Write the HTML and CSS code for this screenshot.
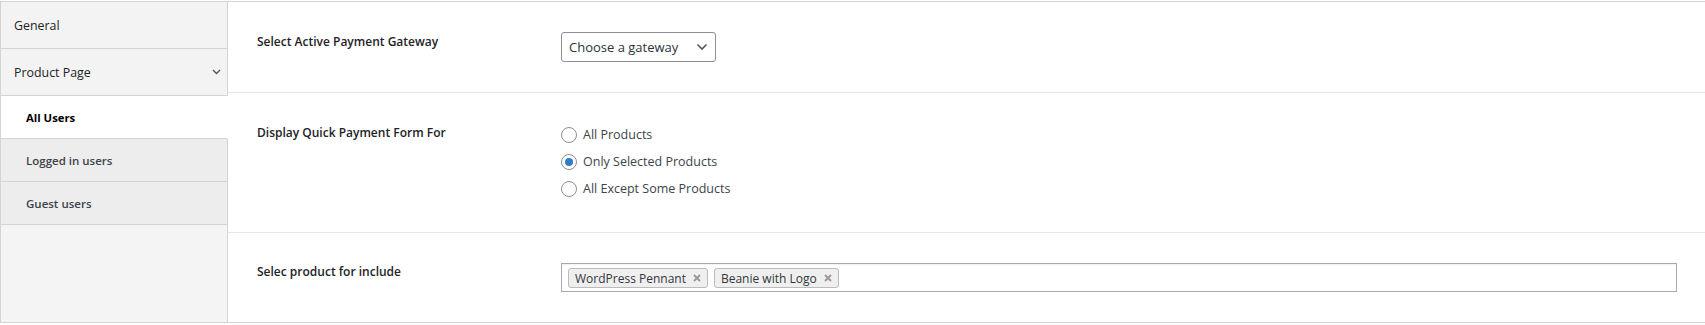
FILE: index.html
```html
<!DOCTYPE html>
<html>
<head lang="en">
    <meta charset="UTF-8">
    <title>Quick Payment Settings</title>
    <link rel="stylesheet" href="styles.css">
</head>
<body>
<div class="settings">
    <div class="tabs">
        <div class="tab">General</div>
        <div class="tab">
            Product Page
            <svg class="tab-arrow" width="9" height="6" viewBox="0 0 9 6"><path d="M1 1l3.5 3.5 3.5-3.5" fill="none" stroke="#50575e" stroke-width="1.4"/></svg>
        </div>
        <ul class="sub-tabs">
            <li class="current">All Users</li>
            <li>Logged in users</li>
            <li>Guest users</li>
        </ul>
        <div class="tabs-fill"></div>
    </div>

    <div class="panel">
        <div class="row">
            <div class="row-label">Select Active Payment Gateway</div>
            <div class="row-field">
                <div class="select">
                    Choose a gateway
                    <svg width="12" height="8" viewBox="0 0 12 8"><path d="M1.5 1.5l4.5 4.5 4.5-4.5" fill="none" stroke="#50575e" stroke-width="1.6"/></svg>
                </div>
            </div>
        </div>

        <div class="row">
            <div class="row-label">Display Quick Payment Form For</div>
            <div class="row-field">
                <ul class="radios">
                    <li><label><input type="radio" name="show_for"> All Products</label></li>
                    <li><label><input type="radio" name="show_for" checked> Only Selected Products</label></li>
                    <li><label><input type="radio" name="show_for"> All Except Some Products</label></li>
                </ul>
            </div>
        </div>

        <div class="row row-last">
            <div class="row-label">Selec product for include</div>
            <div class="row-field">
                <div class="multi">
                    <span class="choice">WordPress Pennant <svg class="remove" width="8" height="8" viewBox="0 0 8 8"><path d="M1 1l6 6M7 1l-6 6" stroke="#999" stroke-width="1.9"/></svg></span>
                    <span class="choice">Beanie with Logo <svg class="remove" width="8" height="8" viewBox="0 0 8 8"><path d="M1 1l6 6M7 1l-6 6" stroke="#999" stroke-width="1.9"/></svg></span>
                </div>
            </div>
        </div>
    </div>
</div>
</body>
</html>
```

FILE: styles.css
```css
* {
    padding: 0;
    margin: 0;
    list-style: none;
    box-sizing: border-box;
}
body {
    font-family: "Open Sans", "Noto Sans", sans-serif;
    font-size: 12px;
    color: #1d2327;
    background: #fff;
}
.settings {
    display: flex;
    margin-top: 1px;
    border-top: 1px solid #d4d4d4;
    border-bottom: 1px solid #d4d4d4;
}

/* left tabs */
.tabs {
    width: 228px;
    flex-shrink: 0;
    display: flex;
    flex-direction: column;
    border-left: 1px solid #d4d4d4;
}
.tab {
    height: 47px;
    padding: 0 6px 0 13px;
    display: flex;
    align-items: center;
    justify-content: space-between;
    font-size: 12.4px;
    background-color: #f3f3f3;
    border-right: 1px solid #d4d4d4;
    border-bottom: 1px solid #d4d4d4;
    color: #1d2327;
}
.sub-tabs li {
    height: 43px;
    padding-left: 25px;
    display: flex;
    align-items: center;
    font-size: 11.5px;
    font-weight: 600;
    color: #3c434a;
    background-color: #ededed;
    border-right: 1px solid #d4d4d4;
    border-bottom: 1px solid #d4d4d4;
}
.sub-tabs .current {
    background-color: #fff;
    border-right-color: #fff;
    color: #000;
    font-weight: 700;
    font-size: 11.3px;
}
.tabs-fill {
    flex: 1;
    background-color: #f4f4f4;
    border-right: 1px solid #d4d4d4;
}

/* right panel */
.panel {
    flex: 1;
}
.row {
    display: flex;
    padding: 30px 28px 30px 29px;
    border-bottom: 1px solid #e6e6e6;
}
.row-last {
    padding-top: 29px;
    border-bottom: none;
}
.row-label {
    width: 304px;
    flex-shrink: 0;
    line-height: 20px;
    font-weight: 600;
    color: #1d2327;
}
.row-field {
    flex: 1;
}

.select {
    width: 155px;
    height: 30px;
    padding: 0 7px 0 7px;
    display: flex;
    align-items: center;
    justify-content: space-between;
    border: 1px solid #8c8f94;
    border-radius: 3px;
    font-size: 13px;
    color: #2c3338;
}

.radios {
    margin-top: -2px;
}
.radios li {
    height: 27px;
    display: flex;
    align-items: center;
}
.radios label {
    display: flex;
    align-items: center;
    gap: 6px;
    font-size: 12.5px;
    color: #3c434a;
}
.radios input {
    appearance: none;
    width: 16px;
    height: 16px;
    border: 1px solid #8c8f94;
    border-radius: 50%;
    background: #fff;
    display: flex;
    align-items: center;
    justify-content: center;
}
.radios input:checked::before {
    content: "";
    width: 8px;
    height: 8px;
    border-radius: 50%;
    background-color: #2f7cc4;
}

.multi {
    margin-top: 1px;
    height: 29px;
    padding: 4px 6px 0;
    display: flex;
    gap: 6px;
    border: 1px solid #aaa;
    box-shadow: inset 0 1px 2px rgba(0, 0, 0, .06);
}
.choice {
    height: 20px;
    padding: 0 6px;
    display: flex;
    align-items: center;
    gap: 7px;
    background-color: #efefef;
    border: 1px solid #bbb;
    border-radius: 3px;
    color: #32373c;
}
```
